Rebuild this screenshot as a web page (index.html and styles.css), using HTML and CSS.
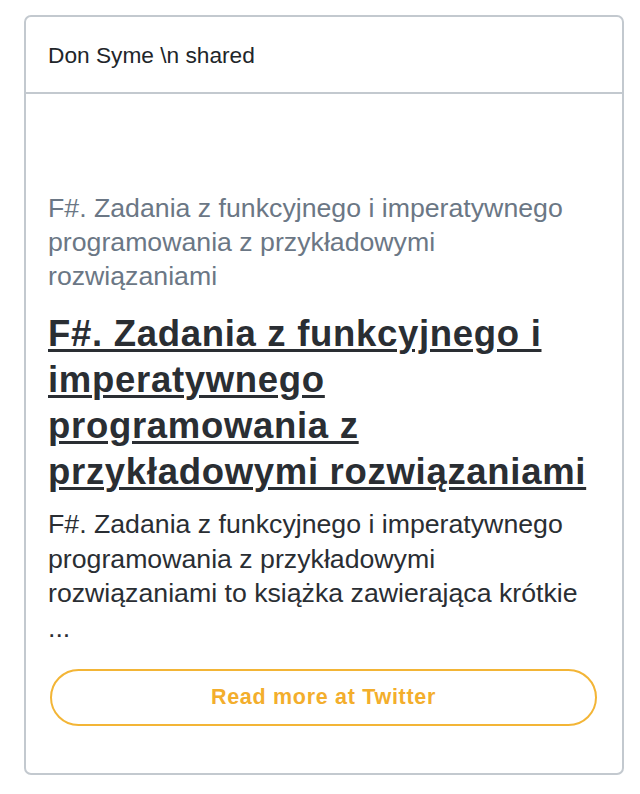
FILE: index.html
```html
<!DOCTYPE html>
<html lang="pl">
<head>
<meta charset="utf-8">
<link rel="stylesheet" href="styles.css">
</head>
<body>
<div class="card">
  <div class="card-header">Don Syme \n shared</div>
  <div class="card-body">
    <p class="site">F#. Zadania z funkcyjnego i imperatywnego programowania z przykładowymi rozwiązaniami</p>
    <h2 class="title"><a href="#">F#. Zadania z funkcyjnego i imperatywnego programowania z przykładowymi rozwiązaniami</a></h2>
    <p class="desc">F#. Zadania z funkcyjnego i imperatywnego programowania z przykładowymi rozwiązaniami to książka zawierająca krótkie<br>...</p>
    <a class="btn" href="#">Read more at Twitter</a>
  </div>
</div>
</body>
</html>
```
FILE: styles.css
```css
html, body {
  margin: 0;
  padding: 0;
  background: #ffffff;
}
body {
  font-family: "Liberation Sans", Arial, sans-serif;
  color: #212529;
}
.card {
  margin: 15px 16px 0 24px;
  border: 2px solid #c3c9cf;
  border-radius: 7px;
  box-sizing: border-box;
  width: 600px;
}
.card-header {
  padding: 24px 22px 23px 22px;
  font-size: 22.7px;
  line-height: 28px;
  border-bottom: 2px solid #c3c9cf;
}
.card-body {
  padding: 97px 24px 47px 22px;
  display: flex;
  flex-direction: column;
}
.site {
  margin: 0;
  font-size: 26.7px;
  line-height: 34px;
  color: #6b7785;
}
.title {
  margin: 18px 0 0 0;
  font-size: 36.5px;
  letter-spacing: 0.7px;
  line-height: 46px;
  font-weight: bold;
}
.title a {
  color: #2a2e33;
  text-decoration: underline;
  text-decoration-thickness: 2.5px;
  text-underline-offset: 3px;
}
.desc {
  margin: 12px 0 0 0;
  font-size: 26.7px;
  line-height: 34.7px;
  color: #2a2e33;
}
.btn {
  margin: 23px 1px 0 2px;
  height: 57px;
  box-sizing: border-box;
  border: 2px solid #f3b536;
  border-radius: 29px;
  display: flex;
  align-items: center;
  justify-content: center;
  color: #f3ae2c;
  font-weight: bold;
  font-size: 21.5px;
  letter-spacing: 0.7px;
  text-decoration: none;
}
```
